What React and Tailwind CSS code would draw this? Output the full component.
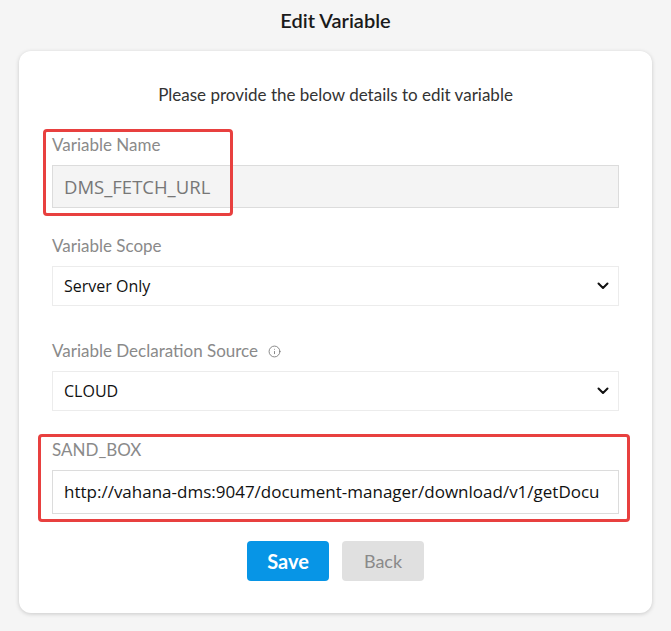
import { Info } from 'lucide-react'

const FONT = { fontFamily: 'Lato, "Noto Sans", sans-serif' }
const VALUE_FONT = { fontFamily: '"Open Sans", "Noto Sans", sans-serif' }

function Chevron() {
  return (
    <svg width="12" height="8" viewBox="0 0 12 8" className="absolute right-[9px] top-1/2 -translate-y-1/2">
      <path d="M1.5 1.5 L6 6 L10.5 1.5" fill="none" stroke="#111" strokeWidth="2" strokeLinecap="round" strokeLinejoin="round" />
    </svg>
  )
}

function Label({ children, className = '' }) {
  return (
    <div className={`h-[20px] leading-[20px] text-[17px] text-[#8a8a8a] flex items-center ${className}`}>
      {children}
    </div>
  )
}

function SelectBox({ value }) {
  return (
    <div
      className="relative mt-[10px] h-[40px] border border-[#ececec] bg-white flex items-center pl-[11px] text-[16px] text-[#111]"
      style={VALUE_FONT}
    >
      {value}
      <Chevron />
    </div>
  )
}

export default function App() {
  return (
    <div className="min-h-screen bg-[#f5f5f5] pb-[18px]" style={FONT}>
      {/* Title */}
      <div className="h-[40px] flex items-center justify-center text-[20px] font-semibold text-[#1a1a1a]">
        Edit Variable
      </div>

      {/* Card */}
      <div className="mt-[11px] ml-[19px] w-[633px] bg-white rounded-[12px] shadow-[0_1px_4px_rgba(0,0,0,0.18)] px-[33px] pt-[34px] pb-[32px]">
        <div className="h-[20px] leading-[20px] text-center text-[17px] text-[#333]">
          Please provide the below details to edit variable
        </div>

        {/* Variable Name */}
        <div className="relative mt-[30px]">
          <Label>Variable Name</Label>
          <div
            className="mt-[10px] h-[43px] border border-[#dcdcdc] bg-[#f4f4f4] flex items-center pl-[11px] text-[18.5px] text-[#777]"
            style={VALUE_FONT}
          >
            DMS_FETCH_URL
          </div>
          <div className="absolute left-[-9px] top-[-6px] w-[190px] h-[87px] border-[3px] border-[#e8403f] rounded-[4px] pointer-events-none" />
        </div>

        {/* Variable Scope */}
        <div className="mt-[28px]">
          <Label>Variable Scope</Label>
          <SelectBox value="Server Only" />
        </div>

        {/* Declaration Source */}
        <div className="mt-[35px]">
          <Label>
            Variable Declaration Source
            <Info size={13} strokeWidth={1.6} className="ml-[10px] text-[#777]" />
          </Label>
          <SelectBox value="CLOUD" />
        </div>

        {/* SAND_BOX */}
        <div className="relative mt-[29px]">
          <Label>SAND_BOX</Label>
          <div
            className="mt-[10px] h-[44px] border border-[#dcdcdc] bg-white flex items-center pl-[11px] text-[17px] text-[#111] overflow-hidden whitespace-nowrap"
            style={VALUE_FONT}
          >
            http://vahana-dms:9047/document-manager/download/v1/getDocu
          </div>
          <div className="absolute left-[-14px] right-[-11px] top-[-6px] bottom-[-8px] border-[3px] border-[#e8403f] rounded-[4px] pointer-events-none" />
        </div>

        {/* Buttons */}
        <div className="mt-[27px] flex justify-center gap-[13px]">
          <button className="w-[82px] h-[40px] rounded-[4px] bg-[#0795e6] text-white text-[20px] font-bold">
            Save
          </button>
          <button className="w-[82px] h-[40px] rounded-[4px] bg-[#e0e0e0] text-[#8a8a8a] text-[18px]">
            Back
          </button>
        </div>
      </div>
    </div>
  )
}
